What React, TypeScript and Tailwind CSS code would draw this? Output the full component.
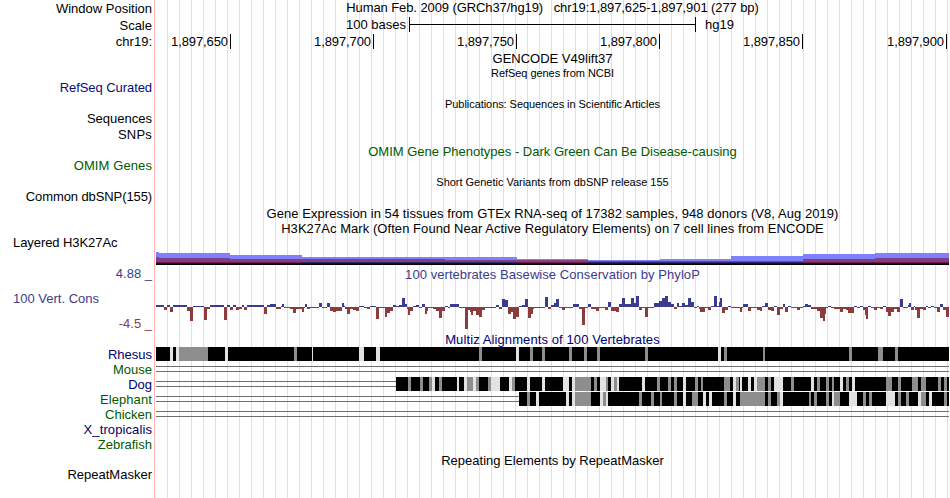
import clsx from 'clsx';

// All x positions are image pixels; the plot area spans 156..949.
const PLOT_X = 156;
const PLOT_W = 793;

const labels = [
  { text: 'Window Position', className: 'mt-px' },
  { text: 'Scale', className: 'mt-[2px]' },
  { text: 'chr19:', className: 'mt-px' },
  { text: 'RefSeq Curated', className: 'mt-[31px] tracking-[-0.07px] text-[#0c0c78]' },
  { text: 'Sequences', className: 'mt-4' },
  { text: 'SNPs', className: 'mt-px tracking-[0.2px]' },
  { text: 'OMIM Genes', className: 'mt-4 tracking-[0.1px] text-[#005a00]' },
  { text: 'Common dbSNP(155)', className: 'mt-4 tracking-[-0.1px]' },
  { text: 'Layered H3K27Ac', className: 'mt-[31px] self-start pl-[13px] tracking-[-0.07px]' },
  { text: '4.88 _', className: 'mt-4 text-[#3c3c8c]' },
  { text: '100 Vert. Cons', className: 'mt-[10px] self-start pl-[13px] text-[#3c3c8c]' },
  { text: '-4.5 _', className: 'mt-[10px] text-[#8c3c3c]' },
  { text: 'Rhesus', className: 'mt-4 text-[#00006e]' },
  { text: 'Mouse', className: 'text-[#005a00]' },
  { text: 'Dog', className: 'text-[#00006e]' },
  { text: 'Elephant', className: 'tracking-[0.1px] text-[#005a00]' },
  { text: 'Chicken', className: 'text-[#005a00]' },
  { text: 'X_tropicalis', className: 'tracking-[0.1px] text-[#00006e]' },
  { text: 'Zebrafish', className: 'text-[#005a00]' },
  { text: 'RepeatMasker', className: 'mt-[15px]' },
];

const ruler = [
  { text: '1,897,650', className: 'w-[75px]' },
  { text: '1,897,700', className: 'w-[143px]' },
  { text: '1,897,750', className: 'w-[143px]' },
  { text: '1,897,800', className: 'w-[143px]' },
  { text: '1,897,850', className: 'w-[143px]' },
  { text: '1,897,900', className: 'w-[144px]' },
];

// [x start, x end, top of blue, top of purple, top of navy]
const h3k27ac = [
  [156, 159, 252, 257, 264],
  [159, 230, 253, 258, 264],
  [230, 302, 255, 259, 264],
  [302, 445, 257, 259, 262],
  [445, 517, 257, 260, 262],
  [517, 588, 259, 260, 264],
  [588, 660, 260, 261, 263],
  [660, 731, 259, 261, 262],
  [731, 803, 256, 261, 262],
  [803, 875, 254, 259, 264],
  [875, 949, 253, 258, 264],
];

// [x start, x end, height], negative values hang below the zero line
const phyloP = [
  [156, 164, 2], [164, 167, -3], [167, 170, 2], [170, 173, -5], [173, 187, 2], [187, 190, -4],
  [190, 193, -14], [193, 204, 1], [204, 207, -13], [207, 210, -2], [210, 224, 2], [224, 227, -13],
  [227, 230, 2], [230, 233, -3], [233, 236, 2], [236, 239, -3], [239, 242, -2], [242, 244, 2],
  [244, 247, -3], [247, 264, 2], [264, 267, -7], [267, 270, 2], [270, 276, 3], [276, 281, -2],
  [281, 282, 1], [282, 284, 3], [284, 290, -1], [290, 293, -2], [293, 296, -6], [296, 302, -2],
  [302, 304, -5], [304, 305, -1], [305, 307, 3], [307, 310, -2], [310, 319, -1], [319, 322, 4],
  [322, 327, -1], [327, 330, 4], [330, 333, -4], [333, 336, -5], [336, 342, -4], [342, 344, 4],
  [344, 345, 1], [345, 347, -2], [347, 350, -7], [350, 353, -2], [353, 356, -3], [356, 359, -4],
  [359, 364, 1], [364, 367, -1], [367, 370, -2], [370, 376, 1], [376, 379, -12], [379, 385, -1],
  [385, 387, -10], [387, 390, -6], [390, 393, -4], [393, 396, 2], [396, 399, 1], [399, 402, 2],
  [402, 405, 9], [405, 407, 3], [407, 408, -2], [408, 410, -8], [410, 413, -4], [413, 416, 1],
  [416, 419, 2], [419, 422, -1], [422, 425, 3], [425, 427, -7], [427, 428, -4], [428, 433, -1],
  [433, 436, -2], [436, 439, -4], [439, 442, -11], [442, 445, -4], [445, 448, 1], [448, 450, -1],
  [450, 459, 3], [459, 465, -1], [465, 468, -22], [468, 470, -3], [470, 471, -5], [471, 473, -8],
  [473, 476, -4], [476, 479, -8], [479, 482, -10], [482, 485, -3], [485, 496, -1], [496, 499, 2],
  [499, 502, -2], [502, 505, 8], [505, 508, 7], [508, 511, -7], [511, 513, -5], [513, 516, -12],
  [516, 519, -10], [519, 522, 1], [522, 525, 2], [525, 528, 8], [528, 531, -11], [531, 533, -7],
  [533, 534, -2], [534, 545, -1], [545, 548, 10], [548, 551, -2], [551, 554, 2], [554, 556, 4],
  [556, 559, 8], [559, 562, -1], [562, 565, -3], [565, 573, -1], [573, 579, 3], [579, 582, -2],
  [582, 585, -18], [585, 588, -1], [588, 591, 3], [591, 596, -2], [596, 599, -4], [599, 605, -1],
  [605, 608, -3], [608, 611, 5], [611, 616, -4], [616, 619, -5], [619, 622, 3], [622, 625, 9],
  [625, 631, 3], [631, 634, 9], [634, 636, 4], [636, 639, 11], [639, 642, -3], [642, 645, -1],
  [645, 648, -10], [648, 654, -1], [654, 659, 4], [659, 662, 6], [662, 665, 9], [665, 668, 11],
  [668, 671, 5], [671, 674, 3], [674, 677, -2], [677, 679, 4], [679, 682, 1], [682, 685, 4],
  [685, 688, 2], [688, 691, 9], [691, 694, 5], [694, 697, -1], [697, 699, 1], [699, 700, -2],
  [700, 705, -5], [705, 708, -1], [708, 711, -3], [711, 714, 1], [714, 717, 11], [717, 719, 1],
  [719, 720, 5], [720, 722, 9], [722, 725, -6], [725, 728, -3], [728, 731, 1], [731, 740, -1],
  [740, 742, -5], [742, 743, -1], [743, 748, 3], [748, 751, -4], [751, 757, -1], [757, 760, -3],
  [760, 762, -4], [762, 765, 1], [765, 768, 4], [768, 771, -3], [771, 774, -4], [774, 777, 1],
  [777, 780, -8], [780, 783, -2], [783, 785, 3], [785, 788, -5], [788, 791, 1], [791, 797, -1],
  [797, 800, -3], [800, 803, -1], [803, 805, 1], [805, 808, 3], [808, 811, 2], [811, 817, -2],
  [817, 820, -4], [820, 823, -11], [823, 825, -14], [825, 826, -7], [826, 828, -1], [828, 831, 1],
  [831, 834, -1], [834, 840, -2], [840, 843, -5], [843, 846, -2], [846, 848, -3], [848, 854, -6],
  [854, 857, 1], [857, 860, -1], [860, 863, 1], [863, 865, -3], [865, 866, -8], [866, 868, -12],
  [868, 871, 1], [871, 874, -1], [874, 877, -3], [877, 880, -1], [880, 883, -2], [883, 886, 1],
  [886, 888, -5], [888, 891, -9], [891, 894, -5], [894, 897, -2], [897, 900, -5], [900, 903, 8],
  [903, 908, -1], [908, 909, 2], [909, 911, 4], [911, 914, -3], [914, 915, 1], [915, 917, -3],
  [917, 920, -11], [920, 923, -2], [923, 926, -3], [926, 928, 1], [928, 931, -1], [931, 934, 1],
  [934, 937, -1], [937, 940, -5], [940, 943, 3], [943, 946, -3], [946, 949, -10],
];

type Gap = [number, number];
type Alignment = { name: string; y: number; start?: number; grey?: Gap[]; light?: Gap[] };

const multiz: Alignment[] = [
  {
    name: 'Rhesus',
    y: 347,
    start: 156,
    grey: [
      [179, 208], [294, 297], [479, 482], [530, 533], [542, 545], [569, 572], [584, 587], [597, 600],
      [645, 648], [724, 727], [763, 765], [849, 852], [878, 883], [895, 898],
    ],
    light: [[170, 173], [176, 179], [225, 228], [312, 313], [359, 364], [376, 380], [516, 519], [718, 721]],
  },
  { name: 'Mouse', y: 362 },
  {
    name: 'Dog',
    y: 377,
    start: 396,
    grey: [
      [408, 411], [420, 423], [429, 432], [439, 442], [467, 473], [476, 479], [488, 491], [512, 515],
      [575, 591], [594, 597], [606, 608], [614, 617], [657, 660], [668, 671], [674, 677], [695, 698],
      [701, 703], [724, 730], [736, 739], [757, 765], [768, 771], [791, 794], [817, 820], [826, 829],
      [832, 834], [846, 849], [886, 892], [898, 901], [912, 918], [921, 926], [938, 941], [944, 947],
    ],
    light: [
      [432, 435], [457, 459], [464, 467], [473, 476], [491, 500], [509, 512], [527, 530], [542, 545],
      [563, 569], [572, 575], [600, 606], [611, 614], [617, 619], [642, 645], [683, 686], [733, 736],
      [740, 742], [748, 751], [754, 757], [774, 783], [811, 814], [840, 843], [852, 855],
    ],
  },
  {
    name: 'Elephant',
    y: 392,
    start: 519,
    grey: [
      [527, 530], [575, 591], [603, 606], [639, 642], [651, 654], [660, 662], [674, 677], [692, 698],
      [724, 727], [740, 765], [768, 771], [777, 780], [809, 811], [814, 817], [826, 829], [834, 840],
      [863, 866], [869, 872], [898, 901], [906, 909], [921, 926], [944, 947],
    ],
    light: [
      [536, 539], [566, 569], [572, 575], [600, 603], [606, 608], [683, 686], [703, 706], [709, 712],
      [733, 736], [780, 783], [832, 834], [849, 857], [886, 895], [918, 921], [929, 932],
    ],
  },
  { name: 'Chicken', y: 407 },
];

const Title = ({ text, className }: { text: string; className?: string }) => (
  <div className={clsx('h-[15px] shrink-0 whitespace-pre text-center leading-[15px]', className)}>{text}</div>
);

const H3K27AcTrack = () => (
  <svg className="mt-[14px] block shrink-0" width={PLOT_W} height={15} viewBox={`${PLOT_X} 250 ${PLOT_W} 15`} shapeRendering="crispEdges">
    {h3k27ac.map(([x0, x1, blue, purple, navy]) => (
      <g key={x0}>
        <rect x={x0} y={blue} width={x1 - x0} height={265 - blue} fill="#8080ff" />
        <rect x={x0} y={purple} width={x1 - x0} height={265 - purple} fill="#804080" />
        <rect x={x0} y={262} width={x1 - x0} height={1} fill={navy < 264 ? '#302868' : '#701850'} />
      </g>
    ))}
    <rect x={PLOT_X} y={263} width={PLOT_W} height={1} fill="#20082c" />
    <rect x={PLOT_X} y={264} width={PLOT_W} height={1} fill="#000000" />
  </svg>
);

const PhyloPTrack = () => (
  <svg className="block shrink-0" width={PLOT_W} height={50} viewBox={`${PLOT_X} 282 ${PLOT_W} 50`} shapeRendering="crispEdges">
    {phyloP.map(([x0, x1, v]) => (
      <rect
        key={x0}
        x={x0}
        y={v > 0 ? 307 - v : 307}
        width={x1 - x0}
        height={Math.abs(v)}
        fill={v > 0 ? '#3c3c8c' : '#8c3c3c'}
      />
    ))}
  </svg>
);

const MultizTrack = () => (
  <svg className="block shrink-0" width={PLOT_W} height={75} viewBox={`${PLOT_X} 347 ${PLOT_W} 75`} shapeRendering="crispEdges">
    {multiz.map(({ name, y, start = PLOT_X + PLOT_W, grey = [], light = [] }) => (
      <g key={name}>
        {/* unaligned stretch is a double line */}
        <rect x={PLOT_X} y={y + 4} width={start - PLOT_X} height={1} fill="#6e6e6e" />
        <rect x={PLOT_X} y={y + 9} width={start - PLOT_X} height={1} fill="#6e6e6e" />
        <rect x={start} y={y} width={PLOT_X + PLOT_W - start} height={14} fill="#000000" />
        {grey.map(([x0, x1]) => (
          <rect key={x0} x={x0} y={y} width={x1 - x0} height={14} fill="#8e8e8e" />
        ))}
        {light.map(([x0, x1]) => (
          <rect key={x0} x={x0} y={y} width={x1 - x0} height={14} fill="#e2e2e2" />
        ))}
      </g>
    ))}
  </svg>
);

export default function App() {
  return (
    <main className="flex h-[498px] w-[950px] overflow-hidden bg-white font-['Liberation_Sans',Arial,sans-serif] text-[13px] text-black">
      {/* Track labels */}
      <div className="flex w-[154px] shrink-0 flex-col items-end">
        {labels.map(({ text, className }) => (
          <div key={text} className={clsx('h-[15px] shrink-0 whitespace-nowrap pr-[2px] leading-[15px]', className)}>
            {text}
          </div>
        ))}
      </div>

      <div className="mr-px w-px shrink-0 bg-[#ffb4b4]" />

      {/* Tracks, over the 12px guide lines */}
      <div className="flex w-[793px] shrink-0 flex-col bg-[linear-gradient(90deg,#dcdcff_1px,transparent_1px)] bg-[length:12px_100%] bg-[position:11px_0]">
        <Title text="Human Feb. 2009 (GRCh37/hg19)   chr19:1,897,625-1,897,901 (277 bp)" className="tracking-[-0.09px]" />

        <div className="mt-[2px] flex h-[15px] shrink-0 leading-[15px]">
          <span className="w-[253px] pr-[3px] text-right">100 bases</span>
          <div className="flex w-[287px] items-center border-x border-black">
            <div className="h-px w-full bg-black" />
          </div>
          <span className="pl-[9px]">hg19</span>
        </div>

        <div className="mt-[2px] flex h-[15px] shrink-0 leading-[15px] tracking-[-0.1px]">
          {ruler.map(({ text, className }) => (
            <div key={text} className={clsx('shrink-0 border-r border-black pr-[2px] text-right', className)}>
              {text}
            </div>
          ))}
        </div>

        <Title text="GENCODE V49lift37" className="mt-[2px]" />
        <Title text="RefSeq genes from NCBI" className="text-[11px] tracking-[-0.05px]" />
        <Title text="Publications: Sequences in Scientific Articles" className="mt-4 text-[11px] tracking-[-0.06px]" />
        <Title text="OMIM Gene Phenotypes - Dark Green Can Be Disease-causing" className="mt-8 text-[#005a00]" />
        <Title text="Short Genetic Variants from dbSNP release 155" className="mt-4 text-[11px] tracking-[-0.02px]" />
        <Title
          text="Gene Expression in 54 tissues from GTEx RNA-seq of 17382 samples, 948 donors (V8, Aug 2019)"
          className="mt-4 tracking-[0.05px]"
        />
        <Title
          text="H3K27Ac Mark (Often Found Near Active Regulatory Elements) on 7 cell lines from ENCODE"
          className="tracking-[0.06px]"
        />
        <H3K27AcTrack />

        <Title text="100 vertebrates Basewise Conservation by PhyloP" className="mt-[2px] tracking-[0.06px] text-[#3c3c8c]" />
        <PhyloPTrack />

        <Title text="Multiz Alignments of 100 Vertebrates" className="tracking-[0.1px] text-[#00006e]" />
        <MultizTrack />

        <Title text="Repeating Elements by RepeatMasker" className="mt-[31px]" />
      </div>
    </main>
  );
}
